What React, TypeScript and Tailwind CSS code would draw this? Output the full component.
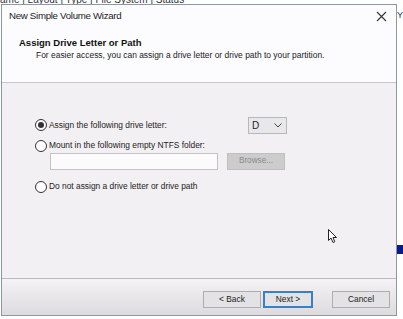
import React from "react";

function Radio({ checked }: { checked?: boolean }) {
  return (
    <span className="w-[12px] h-[12px] rounded-full border border-[#333333] bg-white flex items-center justify-center shrink-0">
      {checked && <span className="w-[6px] h-[6px] rounded-full bg-[#333333]" />}
    </span>
  );
}

export default function App() {
  return (
    <div className="relative w-[403px] h-[319px] bg-white overflow-hidden font-['Liberation_Sans',Arial,sans-serif] text-[#1a1a1a]">
      <div className="h-[4px] overflow-hidden relative">
        <div className="text-[10px] leading-[10px] -mt-[5px] whitespace-nowrap text-[#333]">ame | Layout | Type | File System | Status</div>
      </div>
      <div className="flex">
        <div className="ml-[1px] w-[397px] h-[312px] border border-[#8c98a4] flex flex-col bg-[#f2f0f3]">
          {/* title bar */}
          <div className="h-[23px] bg-[#fcfbfd] flex items-center justify-between pl-[7px] pr-[8px]">
            <span className="text-[9.7px] tracking-[-0.3px] text-[#222]">New Simple Volume Wizard</span>
            <svg width="11" height="11" viewBox="0 0 11 11" className="mr-[1px]">
              <path d="M1 1 L10 10 M10 1 L1 10" stroke="#333" strokeWidth="1.1" />
            </svg>
          </div>
          {/* header */}
          <div className="h-[55px] bg-[#fcfbfd] border-b border-[#c9c6ca] flex flex-col pl-[17px] pt-[9px]">
            <span className="text-[9.5px] font-bold leading-[12px] text-[#111]">Assign Drive Letter or Path</span>
            <span className="text-[8.45px] leading-[12px] pl-[17px] text-[#222]">For easier access, you can assign a drive letter or drive path to your partition.</span>
          </div>
          {/* body */}
          <div className="flex-1 flex flex-col pl-[33px] pt-[33px] text-[8.4px] text-[#222]">
            <div className="flex items-center h-[18px] w-[252px] justify-between">
              <div className="flex items-center gap-[2px]">
                <Radio checked />
                <span>Assign the following drive letter:</span>
              </div>
              <div className="w-[39px] h-[17px] border border-[#b8b8bc] bg-[#e8e7ea] flex items-center justify-between pl-[3px] pr-[4px]">
                <span className="text-[10px]">D</span>
                <svg width="8" height="5" viewBox="0 0 8 5">
                  <path d="M0.5 0.5 L4 4 L7.5 0.5" stroke="#444" strokeWidth="1" fill="none" />
                </svg>
              </div>
            </div>
            <div className="flex items-center gap-[2px] h-[13px] mt-[5px]">
              <Radio />
              <span>Mount in the following empty NTFS folder:</span>
            </div>
            <div className="flex items-center gap-[9px] mt-[1px] pl-[15px]">
              <div className="w-[168px] h-[17px] border border-[#c4c2c6] bg-[#fbfbfc]" />
              <div className="w-[58px] h-[17px] border border-[#bfbfbf] bg-[#cccccc] flex items-center justify-center text-[#8a8a8a] text-[8.2px]">Browse...</div>
            </div>
            <div className="flex items-center gap-[2px] h-[13px] mt-[10px]">
              <Radio />
              <span>Do not assign a drive letter or drive path</span>
            </div>
          </div>
          {/* footer */}
          <div className="h-[37px] border-t border-[#bdbabe] bg-gradient-to-b from-[#f4f2f5] to-[#dedbde] flex items-start justify-end pt-[12px] pr-[6px] text-[8.4px] text-[#222]">
            <div className="w-[58px] h-[17px] border border-[#adadad] bg-[#e3e2e4] flex items-center justify-center">&lt; Back</div>
            <div className="ml-[2px] w-[50px] h-[17px] border-2 border-[#3b7fc4] bg-[#e3e2e4] flex items-center justify-center">Next &gt;</div>
            <div className="ml-[19px] w-[58px] h-[17px] border border-[#adadad] bg-[#e3e2e4] flex items-center justify-center">Cancel</div>
          </div>
        </div>
        <div className="flex-1 flex flex-col">
          <span className="text-[9px] mt-[5px] text-[#333]">Y</span>
          <div className="mt-[222px] h-[9px] bg-[#0a1a8a]" />
        </div>
      </div>
      {/* mouse cursor */}
      <svg className="absolute left-[328px] top-[229px]" width="10" height="15" viewBox="0 0 10 15">
        <path d="M0.5 0.5 L0.5 11.5 L3 9 L5 13.5 L6.8 12.7 L5 8.5 L8.5 8.5 Z" fill="white" stroke="#222" strokeWidth="1" />
      </svg>
    </div>
  );
}
